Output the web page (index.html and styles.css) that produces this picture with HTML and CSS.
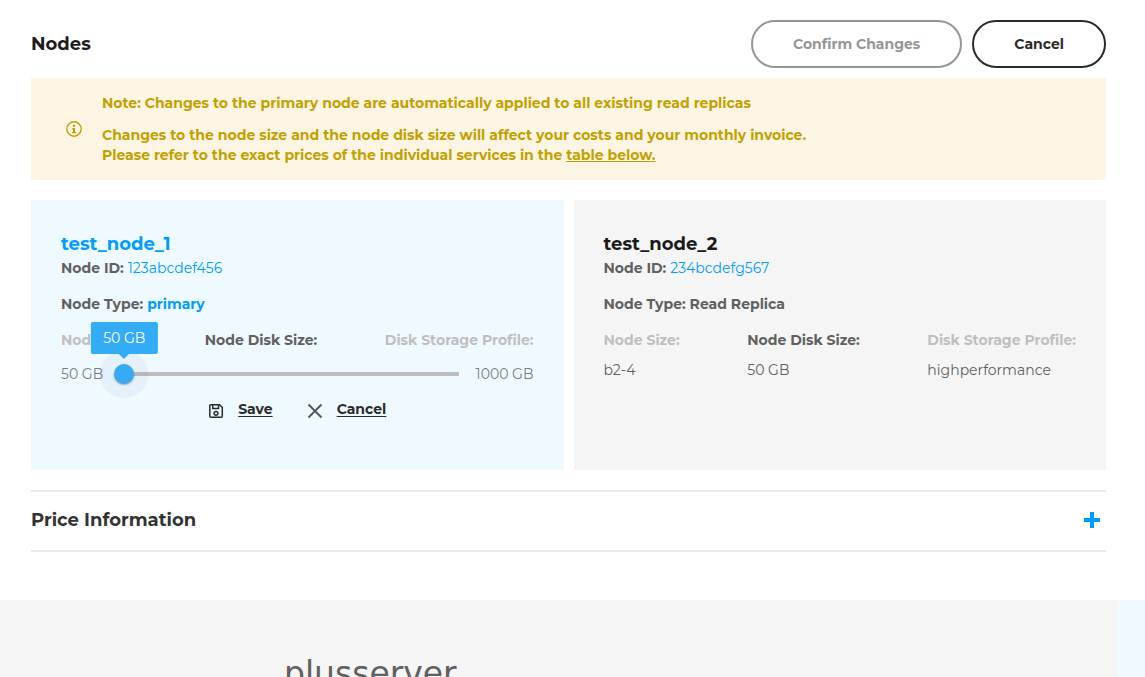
FILE: index.html
```html
<!DOCTYPE html>
<html lang="en">
<head>
<meta charset="utf-8">
<title>Nodes</title>
<link rel="stylesheet" href="styles.css">
</head>
<body>
<main class="content">
  <header class="header">
    <h1 class="heading">Nodes</h1>
    <div class="header-actions">
      <button class="button" type="button" disabled>Confirm Changes</button>
      <button class="button" type="button">Cancel</button>
    </div>
  </header>

  <section class="notice">
    <svg class="notice-icon" viewBox="0 0 16 16" aria-hidden="true">
      <circle cx="8" cy="8" r="7.2" fill="none" stroke="currentColor" stroke-width="1.4"/>
      <circle cx="8" cy="4.7" r="1.2" fill="currentColor"/>
      <path d="M6.2 7h2.9v4h1v1.3H6V11h1V8.3h-.8z" fill="currentColor"/>
    </svg>
    <div class="notice-text">
      <p>Note: Changes to the primary node are automatically applied to all existing read replicas</p>
      <p>Changes to the node size and the node disk size will affect your costs and your monthly invoice.<br>Please refer to the exact prices of the individual services in the <a href="#prices">table below.</a></p>
    </div>
  </section>

  <div class="nodes">
    <article class="node node-active">
      <h2 class="node-title">test_node_1</h2>
      <p class="node-line">Node ID: <a class="node-id" href="#node-1">123abcdef456</a></p>
      <p class="node-line">Node Type: <span class="primary">primary</span></p>
      <div class="specs">
        <span class="muted">Node Size:</span>
        <label for="disk-size">Node Disk Size:</label>
        <span class="muted">Disk Storage Profile:</span>
      </div>
      <div class="slider">
        <span>50 GB</span>
        <div class="slider-control">
          <input id="disk-size" class="range" type="range" min="50" max="1000" value="50">
          <output class="tooltip" for="disk-size">50 GB</output>
        </div>
        <span>1000 GB</span>
      </div>
      <div class="edit-actions">
        <button class="text-button" type="button">
          <svg class="action-icon" viewBox="0 0 16 16" aria-hidden="true" fill="none" stroke="#2b2b2b" stroke-width="1.5">
            <path d="M2.8 1.8h8.7l2.8 2.7v8.7q0 1-1 1H2.8q-1 0-1-1V2.8q0-1 1-1z"/>
            <path d="M4.8 2v3.6h5.7V2"/>
            <circle cx="8" cy="10.3" r="1.9"/>
          </svg>
          <span class="action-label">Save</span>
        </button>
        <button class="text-button" type="button">
          <svg class="action-icon" viewBox="0 0 16 16" aria-hidden="true" fill="none" stroke="#555" stroke-width="1.9">
            <path d="M1.5 1.5l13 13M14.5 1.5l-13 13"/>
          </svg>
          <span class="action-label">Cancel</span>
        </button>
      </div>
    </article>

    <article class="node">
      <h2 class="node-title">test_node_2</h2>
      <p class="node-line">Node ID: <a class="node-id" href="#node-2">234bcdefg567</a></p>
      <p class="node-line">Node Type: Read Replica</p>
      <dl class="specs">
        <div class="spec"><dt class="muted">Node Size:</dt><dd>b2-4</dd></div>
        <div class="spec"><dt>Node Disk Size:</dt><dd>50 GB</dd></div>
        <div class="spec"><dt class="muted">Disk Storage Profile:</dt><dd>highperformance</dd></div>
      </dl>
    </article>
  </div>

  <section class="prices" id="prices">
    <button class="prices-toggle" type="button" aria-expanded="false">
      <span>Price Information</span>
      <svg class="plus" viewBox="0 0 16 16" aria-hidden="true"><path d="M6 0h4v6h6v4h-6v6H6v-6H0V6h6z" fill="#009cff"/></svg>
    </button>
  </section>
</main>
<footer class="footer">
  <div class="footer-main"><span class="logo">plusserver</span></div>
  <div class="footer-side"></div>
</footer>
</body>
</html>
```
FILE: styles.css
```css
* { box-sizing: border-box; }

body {
  margin: 0;
  height: 100vh;
  overflow: hidden;
  display: flex;
  flex-direction: column;
  background: #fff;
  color: #606060;
  font: 14px/20px Montserrat, Inter, "Liberation Sans", sans-serif;
}

h1, h2, p, dl, dd { margin: 0; }
button { font: inherit; background: none; border: 0; padding: 0; cursor: pointer; }

.content { flex: none; padding: 20px 39px 48px 31px; }

.header { display: flex; justify-content: space-between; align-items: center; padding-bottom: 10px; }
.heading { color: #1d1d1d; font-size: 18px; line-height: 28px; font-weight: 700; }
.header-actions { display: flex; gap: 10px; }
.button {
  height: 48px;
  padding: 0 40px;
  border: 2px solid #2b2b2b;
  border-radius: 24px;
  color: #2b2b2b;
  font-weight: 700;
}
.button:disabled { border-color: #959595; color: #959595; }

.notice {
  display: flex;
  align-items: center;
  gap: 20px;
  padding: 15px 35px;
  background: #fdf5e3;
  color: #c1a100;
  font-weight: 700;
}
.notice-icon { width: 16px; height: 16px; flex: none; }
.notice-text { display: grid; gap: 12px; }
.notice a { color: inherit; }

.nodes { display: grid; grid-template-columns: 1fr 1fr; gap: 10px; margin: 20px 0; }
.node { min-height: 270px; padding: 30px; background: #f5f5f5; }
.node-active { background: #eefaff; }
.node-title { color: #1a1a1a; font-size: 18px; line-height: 28px; font-weight: 700; }
.node-active .node-title, .primary { color: #009cff; }
.node-line { font-weight: 700; margin-bottom: 16px; }
.node-id { color: #009cff; font-weight: 400; text-decoration: none; }

.specs { display: flex; justify-content: space-between; font-weight: 700; }
.spec { display: grid; gap: 10px; }
.spec dd { font-weight: 400; }
.muted { color: #bfbfbf; }

.slider { display: flex; align-items: center; margin-top: 14px; color: #7c7c7c; }
.slider-control { position: relative; flex: 1; display: flex; margin: 0 7px 0 11px; }
.range {
  appearance: none;
  width: 100%;
  height: 20px;
  margin: 0;
  background: linear-gradient(#bdbdbd, #bdbdbd) center / calc(100% - 20px) 4px no-repeat;
}
.range::-webkit-slider-thumb {
  appearance: none;
  width: 20px;
  height: 20px;
  border-radius: 50%;
  background: #36aaf4;
  box-shadow: 0 1px 2px rgba(0, 0, 0, .35), 0 0 0 14px rgba(63, 81, 181, .05);
}
.tooltip {
  position: absolute;
  left: 10px;
  bottom: 30px;
  transform: translateX(-50%);
  padding: 6px 12px;
  border-radius: 2px;
  background: #33acf6;
  color: #fff;
  white-space: nowrap;
}
.tooltip::after {
  content: "";
  position: absolute;
  top: 100%;
  left: 50%;
  margin-left: -5px;
  border: 5px solid transparent;
  border-top-color: #33acf6;
  border-bottom: 0;
}

.edit-actions { display: flex; justify-content: center; gap: 34px; margin-top: 15px; }
.text-button { display: flex; align-items: center; gap: 14px; color: #2b2b2b; font-weight: 700; }
.action-icon { width: 16px; height: 16px; margin-top: 3px; }
.action-label { text-decoration: underline; text-underline-offset: 2px; }

.prices { border: solid #e6ebee; border-width: 2px 0; }
.prices-toggle {
  width: 100%;
  display: flex;
  justify-content: space-between;
  align-items: center;
  padding: 14px 6px 16px 0;
  color: #333;
  font-size: 18px;
  line-height: 28px;
  font-weight: 700;
}
.plus { width: 16px; height: 16px; }

.footer { flex: 1 0 auto; display: flex; background: #f5f5f5; }
.footer-main { flex: 1; height: 0; padding: 54px 284px 0; }
.footer-side { width: 27px; background: #eefaff; }
.logo { font: 33px/40px "DejaVu Sans", sans-serif; color: #606060; }
```
